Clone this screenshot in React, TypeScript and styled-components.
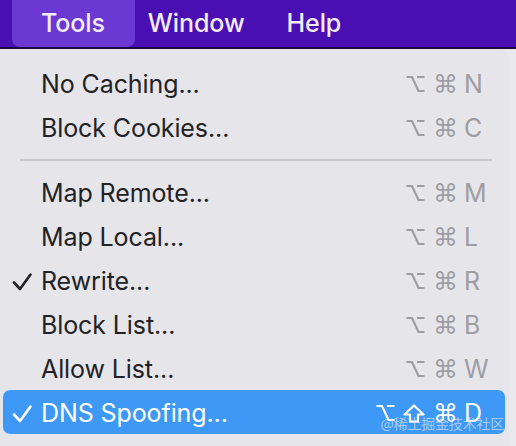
import React from "react";
import styled, { createGlobalStyle } from "styled-components";

const Global = createGlobalStyle`
  html, body { margin: 0; padding: 0; }
  body {
    background: #e9e8ed;
    width: 516px;
    height: 446px;
    overflow: hidden;
    font-family: "Inter", "Liberation Sans", sans-serif;
    -webkit-font-smoothing: antialiased;
  }
`;

const Screen = styled.div`
  position: relative;
  width: 516px;
  height: 446px;
  overflow: hidden;
`;

const MenuBar = styled.div`
  height: 47px;
  display: flex;
  align-items: stretch;
  padding-left: 12px;
  background: #4a0fb3;
  border-bottom: 2px solid #1d0a3e;
`;

const Title = styled.div<{ $active?: boolean }>`
  display: flex;
  align-items: center;
  padding: ${(p) => (p.$active ? "0 30px 1px 29px" : "0 21px 1px")};
  margin-right: ${(p) => (p.$active ? "-8px" : "0")};
  border-radius: 0 0 8px 8px;
  background: ${(p) => (p.$active ? "#6b38d3" : "transparent")};
  color: #f3ecff;
  font-size: 25px;
  font-weight: 500;
  letter-spacing: -0.1px;
`;

const Menu = styled.div`
  width: 502px;
  padding: 12px 4px 0 3px;
  background: #e6e5ea;
  border-top-right-radius: 10px;
  height: 400px;
`;

const Row = styled.div<{ $selected?: boolean }>`
  height: 44px;
  display: flex;
  align-items: center;
  border-radius: 7px;
  padding: 0 19px 0 9px;
  background: ${(p) => (p.$selected ? "#3d99f5" : "transparent")};
  color: ${(p) => (p.$selected ? "#ffffff" : "#222224")};
`;

const CheckCell = styled.div`
  width: 29px;
  height: 20px;
  display: flex;
  align-items: center;
  padding-top: 3px;
`;

const Label = styled.div`
  flex: 1;
  font-size: 25px;
  letter-spacing: -0.1px;
  padding-top: 2px;
`;

const Shortcut = styled.div<{ $selected?: boolean }>`
  display: flex;
  align-items: center;
  color: ${(p) => (p.$selected ? "#ffffff" : "#9e9da3")};
  font-size: 25px;
  padding-top: 2px;
`;

const Mod = styled.span<{ $gap: number }>`
  display: flex;
  align-items: center;
  font-family: "DejaVu Sans", sans-serif;
  font-size: 25px;
  margin-right: ${(p) => p.$gap}px;
`;

const Key = styled.span`
  width: 22px;
`;

const Separator = styled.div<{ $last?: boolean }>`
  height: ${(p) => (p.$last ? "22px" : "21px")};
  display: flex;
  align-items: ${(p) => (p.$last ? "flex-end" : "center")};
  padding: 0 13px 0 17px;
  &::after {
    content: "";
    flex: 1;
    height: 2px;
    background: #c9c8cd;
  }
`;

const Watermark = styled.div`
  position: absolute;
  right: 12px;
  bottom: 13px;
  font-family: "Noto Sans CJK SC", sans-serif;
  font-size: 14px;
  color: rgba(215, 225, 240, 0.7);
  letter-spacing: -0.2px;
`;

const Check = ({ color }: { color: string }) => (
  <svg width="20" height="18" viewBox="0 0 20 18">
    <path
      d="M2 9.5 L8 16 L18.5 1.5"
      fill="none"
      stroke={color}
      strokeWidth="2.6"
      strokeLinecap="round"
      strokeLinejoin="round"
    />
  </svg>
);

const ShiftIcon = () => (
  <svg width="22" height="19" viewBox="0 0 22 19">
    <path
      d="M11 1.5 L20.5 10.5 L15 10.5 L15 17.5 L7 17.5 L7 10.5 L1.5 10.5 Z"
      fill="none"
      stroke="currentColor"
      strokeWidth="2.2"
      strokeLinejoin="round"
    />
  </svg>
);

const OptionIcon = () => (
  <svg width="19" height="18" viewBox="0 0 19 18">
    <path
      d="M0.5 2 H6 L12.5 16 H18.5 M11 2 H18.5"
      fill="none"
      stroke="currentColor"
      strokeWidth="2.2"
      strokeLinejoin="miter"
    />
  </svg>
);

type Item = { label: string; mods: string[]; key: string; checked?: boolean; selected?: boolean };

const groupA: Item[] = [
  { label: "No Caching...", mods: ["⌥", "⌘"], key: "N" },
  { label: "Block Cookies...", mods: ["⌥", "⌘"], key: "C" },
];

const groupB: Item[] = [
  { label: "Map Remote...", mods: ["⌥", "⌘"], key: "M" },
  { label: "Map Local...", mods: ["⌥", "⌘"], key: "L" },
  { label: "Rewrite...", mods: ["⌥", "⌘"], key: "R", checked: true },
  { label: "Block List...", mods: ["⌥", "⌘"], key: "B" },
  { label: "Allow List...", mods: ["⌥", "⌘"], key: "W" },
  { label: "DNS Spoofing...", mods: ["⌥", "⇧", "⌘"], key: "D", checked: true, selected: true },
];

const renderMod = (m: string) => {
  if (m === "⇧") return <ShiftIcon />;
  if (m === "⌥") return <OptionIcon />;
  return m;
};

const MenuRow = ({ item }: { item: Item }) => (
  <Row $selected={item.selected}>
    <CheckCell>{item.checked && <Check color={item.selected ? "#ffffff" : "#222224"} />}</CheckCell>
    <Label>{item.label}</Label>
    <Shortcut $selected={item.selected}>
      {item.mods.map((m, i) => (
        <Mod key={i} $gap={m === "⌘" ? 6 : 8}>
          {renderMod(m)}
        </Mod>
      ))}
      <Key>{item.key}</Key>
    </Shortcut>
  </Row>
);

export default function App() {
  return (
    <Screen>
      <Global />
      <MenuBar>
        <Title $active>Tools</Title>
        <Title>Window</Title>
        <Title>Help</Title>
      </MenuBar>
      <Menu>
        {groupA.map((it) => (
          <MenuRow key={it.label} item={it} />
        ))}
        <Separator />
        {groupB.map((it) => (
          <MenuRow key={it.label} item={it} />
        ))}
        <Separator $last />
      </Menu>
      <Watermark>@稀土掘金技术社区</Watermark>
    </Screen>
  );
}
